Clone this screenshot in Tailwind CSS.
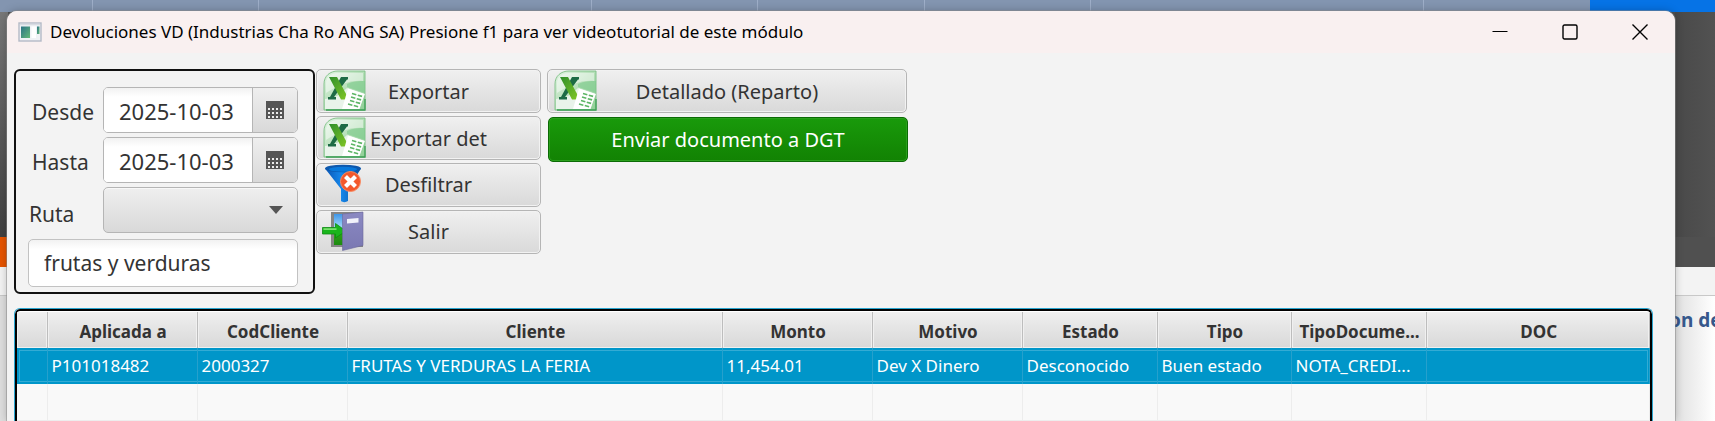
<!DOCTYPE html>
<html lang="es">
<head>
  <meta charset="UTF-8" />
  <meta name="viewport" content="width=device-width, initial-scale=1.0" />
  <title>Devoluciones VD</title>
  <script src="https://cdn.jsdelivr.net/npm/@tailwindcss/browser@4"></script>
</head>

<body class="relative h-screen overflow-hidden bg-white font-['Noto_Sans','Open_Sans',sans-serif] text-[#333333]">

  <!-- application behind the window -->
  <div class="absolute inset-0 flex flex-col" aria-hidden="true">
    <div class="flex h-3 shrink-0 bg-[#8395b0]">
      <div class="w-[93px] border-r border-[#9eaec8]"></div>
      <div class="grid flex-1 grid-cols-[1fr_2fr_1fr_1fr_1fr_2fr_1fr] divide-x divide-[#9eaec8]">
        <div></div><div></div><div></div><div></div><div></div><div></div><div></div>
      </div>
      <div class="w-[125px] bg-[#0673e6]"></div>
    </div>
    <div class="flex h-[225px] shrink-0 justify-between bg-[#505050]">
      <div class="w-2 bg-gradient-to-b from-[#777777] to-[#404040]"></div>
      <div class="w-10 bg-gradient-to-r from-[#494949] to-[#525252]"></div>
    </div>
    <div class="flex h-[30px] shrink-0 justify-between">
      <div class="w-2 bg-[#e65400]"></div>
      <div class="w-11 bg-[#505050]"></div>
    </div>
    <div class="h-[29px] shrink-0 border-b border-[#c8c8c8] bg-[#f3f3f3]"></div>
    <div class="flex flex-1 justify-between">
      <div class="w-2 bg-[#dedede]"></div>
      <div class="w-[46px] bg-gradient-to-r from-[#dcdcdc] to-white pt-3">
        <p class="text-[19px] leading-6 font-bold whitespace-nowrap text-[#36588c]">on de</p>
      </div>
    </div>
  </div>

  <!-- window -->
  <div class="relative mt-[11px] mr-10 ml-[7px] flex h-[calc(100vh-11px)] flex-col overflow-hidden rounded-t-[10px] bg-[#f3f3f3] shadow-[0_0_0_1px_#8a8a8a80,0_0_8px_#00000040]">

    <header class="flex h-[42px] shrink-0 items-center bg-[#f9f0f0] pl-[11px] text-black">
      <svg class="h-5 w-6 shrink-0" viewBox="0 0 24 20">
        <defs>
          <linearGradient id="pane" x1="0" y1="0" x2="1" y2="1">
            <stop offset="0" stop-color="#2c7486" />
            <stop offset="1" stop-color="#64b978" />
          </linearGradient>
        </defs>
        <rect x="1" y="1" width="22" height="18" fill="#f0f2f5" stroke="#b4bac6" stroke-width="1.4" />
        <path d="M2 2.5h20" stroke="#d8dce2" stroke-width="1.5" />
        <rect x="3" y="4.500" width="9" height="11.500" fill="url(#pane)" />
        <rect x="13.500" y="4.500" width="4.500" height="11.500" fill="#ffffff" />
        <rect x="19" y="4.500" width="2.500" height="7.500" fill="url(#pane)" />
      </svg>
      <h1 class="ml-2 text-[17px] leading-6 whitespace-nowrap">Devoluciones VD (Industrias Cha Ro ANG SA) Presione f1 para ver videotutorial de este módulo</h1>
      <div class="ml-auto flex h-full">
        <button type="button" aria-label="Minimizar" class="flex w-[70px] items-center justify-center">
          <svg class="h-4 w-4" viewBox="0 0 16 16" fill="none" stroke="currentColor"><path d="M.5 7.500h15" /></svg>
        </button>
        <button type="button" aria-label="Maximizar" class="flex w-[70px] items-center justify-center">
          <svg class="h-4 w-4" viewBox="0 0 16 16" fill="none" stroke="currentColor" stroke-width="1.400"><rect x="1" y="1" width="14" height="14" rx="1.500" /></svg>
        </button>
        <button type="button" aria-label="Cerrar" class="flex w-[70px] items-center justify-center">
          <svg class="h-4 w-4" viewBox="0 0 16 16" fill="none" stroke="currentColor" stroke-width="1.400"><path d="m.5.5 15 15M15.500.5l-15 15" /></svg>
        </button>
      </div>
    </header>

    <main class="flex min-h-0 flex-1 flex-col pt-4 pr-[22px] pl-[7px]">
      <div class="flex items-start text-[20px] leading-7">

        <form class="h-[225px] w-[301px] rounded-md border-2 border-[#111111] pt-4 pl-3 text-[21px]">
          <div class="grid grid-cols-[75px_195px] gap-y-1">
            <label for="desde" class="self-center pt-1 pl-1">Desde</label>
            <div class="flex h-[46px] overflow-hidden rounded-[5px] border border-[#b5b5b5] bg-white">
              <input id="desde" type="text" value="2025-10-03" class="min-w-0 flex-1 bg-gradient-to-b from-[#f2f2f2] to-white to-20% pt-px pl-[15px] text-[22px] outline-none" />
              <button type="button" aria-label="Elegir fecha desde" class="flex w-[45px] items-center justify-center border-l border-[#b5b5b5] bg-gradient-to-b from-[#efefef] to-[#d9d9d9]">
                <svg class="h-[18px] w-[18px]" viewBox="0 0 18 18"><path fill="#555555" d="M0 0h18v18H0z" /><path stroke="#ececec" stroke-width="2" stroke-dasharray="2 2" d="M2 8h14M2 12h14M2 16h14" /></svg>
              </button>
            </div>
            <label for="hasta" class="self-center pt-1 pl-1">Hasta</label>
            <div class="flex h-[46px] overflow-hidden rounded-[5px] border border-[#b5b5b5] bg-white">
              <input id="hasta" type="text" value="2025-10-03" class="min-w-0 flex-1 bg-gradient-to-b from-[#f2f2f2] to-white to-20% pt-px pl-[15px] text-[22px] outline-none" />
              <button type="button" aria-label="Elegir fecha hasta" class="flex w-[45px] items-center justify-center border-l border-[#b5b5b5] bg-gradient-to-b from-[#efefef] to-[#d9d9d9]">
                <svg class="h-[18px] w-[18px]" viewBox="0 0 18 18"><path fill="#555555" d="M0 0h18v18H0z" /><path stroke="#ececec" stroke-width="2" stroke-dasharray="2 2" d="M2 8h14M2 12h14M2 16h14" /></svg>
              </button>
            </div>
            <label for="ruta" class="self-center pt-2 pl-px">Ruta</label>
            <div class="relative h-[46px]">
              <select id="ruta" class="h-[46px] w-full appearance-none rounded-[5px] border border-[#b5b5b5] bg-gradient-to-b from-[#efefef] to-[#d9d9d9] px-4 shadow-[inset_0_1px_0_#f8f8f8]"><option></option></select>
              <svg class="pointer-events-none absolute top-[19px] right-[15px] h-2 w-[14px]" viewBox="0 0 14 8"><path fill="#555555" d="M0 0h14L7 8z" /></svg>
            </div>
          </div>
          <input type="text" value="frutas y verduras" aria-label="Buscar" class="mt-[6px] h-[48px] w-[270px] rounded-[5px] border border-[#c2c2c2] bg-gradient-to-b from-[#f2f2f2] to-white to-20% pl-[15px] outline-none" />
        </form>

        <div class="ml-px flex w-[225px] flex-col gap-[3px]">
          <button type="button" class="relative h-[44px] rounded-[5px] border border-[#b5b5b5] bg-gradient-to-b from-[#f0f0f0] to-[#d9d9d9] pt-px shadow-[inset_0_0_0_1px_#f2f2f2]">
            <svg class="absolute top-0 left-[6px] h-[41px] w-[43px]"><use href="#excel" /></svg>
            Exportar
          </button>
          <button type="button" class="relative h-[44px] rounded-[5px] border border-[#b5b5b5] bg-gradient-to-b from-[#f0f0f0] to-[#d9d9d9] pt-px shadow-[inset_0_0_0_1px_#f2f2f2]">
            <svg class="absolute top-0 left-[6px] h-[41px] w-[43px]"><use href="#excel" /></svg>
            Exportar det
          </button>
          <button type="button" class="relative h-[44px] rounded-[5px] border border-[#b5b5b5] bg-gradient-to-b from-[#f0f0f0] to-[#d9d9d9] shadow-[inset_0_0_0_1px_#f2f2f2]">
            <svg class="absolute top-0 left-[5px] h-[41px] w-[43px]" viewBox="0 0 43 41">
              <defs>
                <linearGradient id="funnel" x1="0" x2="1">
                  <stop offset="0" stop-color="#0a55b4" />
                  <stop offset=".45" stop-color="#1687ea" />
                  <stop offset="1" stop-color="#0a4f9e" />
                </linearGradient>
              </defs>
              <path fill="url(#funnel)" d="M3 4.500 19 25v12c1.500 1.500 5 1.500 7 0V25L39 4.500z" />
              <ellipse cx="21" cy="4.500" rx="18" ry="3.800" fill="#0d58ad" />
              <ellipse cx="21" cy="5.300" rx="14" ry="2.500" fill="#0879dc" />
              <circle cx="28.500" cy="17.500" r="10" fill="#f4592c" stroke="#f98b62" />
              <path stroke="#ffffff" stroke-width="4.200" d="m23.500 12.500 10 10M33.500 12.500l-10 10" />
            </svg>
            Desfiltrar
          </button>
          <button type="button" class="relative h-[44px] rounded-[5px] border border-[#b5b5b5] bg-gradient-to-b from-[#f0f0f0] to-[#d9d9d9] shadow-[inset_0_0_0_1px_#f2f2f2]">
            <svg class="absolute top-0 left-[5px] h-[41px] w-[43px]" viewBox="0 0 43 41">
              <defs>
                <linearGradient id="sky" x1="0" y1="0" x2="0" y2="1">
                  <stop offset="0" stop-color="#3f96e8" />
                  <stop offset=".45" stop-color="#a8dcfa" />
                  <stop offset=".5" stop-color="#35a81c" />
                  <stop offset="1" stop-color="#1c8a10" />
                </linearGradient>
                <linearGradient id="door" x1="0" y1="0" x2="0" y2="1">
                  <stop offset="0" stop-color="#8b89c2" />
                  <stop offset="1" stop-color="#7a78b2" />
                </linearGradient>
              </defs>
              <path fill="#858585" d="M9 1h32v35H9z" />
              <path fill="url(#sky)" d="M12 3h12v31H12z" />
              <path fill="#19b51c" stroke="#0d8a12" stroke-width=".8" d="M.5 16.500h13v-4L24 20l-10.500 7v-4H.5z" />
              <path fill="#7be06e" d="M1.500 17.300h13v1.700h-13z" />
              <path fill="url(#door)" stroke="#6c6a9c" stroke-width=".6" d="M20.500 3 41 1v33.500l-20.500 5z" />
              <path fill="#f1f1fa" d="m25 8 11.500-1v4.500L25 12.500z" />
            </svg>
            Salir
          </button>
        </div>

        <div class="ml-[6px] flex w-[361px] flex-col gap-1">
          <button type="button" class="relative mr-px h-[44px] rounded-[5px] border border-[#b5b5b5] bg-gradient-to-b from-[#f0f0f0] to-[#d9d9d9] pt-px shadow-[inset_0_0_0_1px_#f2f2f2]">
            <svg class="absolute top-0 left-[6px] h-[41px] w-[43px]"><use href="#excel" /></svg>
            Detallado (Reparto)
          </button>
          <button type="button" class="ml-px h-[45px] rounded-[5px] border border-[#0b6b05] bg-gradient-to-b from-[#199a0b] to-[#128203] text-white shadow-[inset_0_0_0_1px_#2a9f1c]">Enviar documento a DGT</button>
        </div>
      </div>

      <!-- results -->
      <div class="mt-[14px] min-h-0 flex-1 overflow-hidden rounded-t-md border border-b-0 border-[#2aa5cf] bg-white">
        <div class="h-full overflow-hidden rounded-t-[5px] border-2 border-b-0 border-black pt-px">
          <table class="w-full table-fixed border-collapse text-[17px] leading-6">
            <colgroup>
              <col class="w-[30px]" /><col class="w-[150px]" /><col class="w-[150px]" /><col class="w-[375px]" /><col class="w-[150px]" />
              <col class="w-[150px]" /><col class="w-[135px]" /><col class="w-[134px]" /><col class="w-[135px]" /><col />
            </colgroup>
            <thead>
              <tr class="h-9 bg-gradient-to-b from-[#efefef] to-[#d8d8d8] *:border-r *:border-[#bdbdbd] *:pt-1 *:pl-[2px] *:whitespace-nowrap *:shadow-[inset_0_0_0_1px_#f0f0f0]">
                <td></td>
                <th scope="col">Aplicada a</th>
                <th scope="col">CodCliente</th>
                <th scope="col">Cliente</th>
                <th scope="col">Monto</th>
                <th scope="col">Motivo</th>
                <th scope="col">Estado</th>
                <th scope="col">Tipo</th>
                <th scope="col">TipoDocume...</th>
                <th scope="col">DOC</th>
              </tr>
            </thead>
            <tbody>
              <tr class="h-9 bg-[#0096c9] text-white shadow-[inset_0_0_0_2px_#0096c9,inset_0_0_0_3px_#33abd4] *:border-r *:border-[#26a0cc] *:pl-1 *:whitespace-nowrap">
                <td></td>
                <td>P101018482</td>
                <td>2000327</td>
                <td>FRUTAS Y VERDURAS LA FERIA</td>
                <td>11,454.01</td>
                <td>Dev X Dinero</td>
                <td>Desconocido</td>
                <td>Buen estado</td>
                <td>NOTA_CREDI...</td>
                <td></td>
              </tr>
              <tr class="h-9 border-b border-[#ededed] bg-[#f9f9f9] *:border-r *:border-[#ededed]">
                <td></td><td></td><td></td><td></td><td></td><td></td><td></td><td></td><td></td><td></td>
              </tr>
            </tbody>
          </table>
        </div>
      </div>
    </main>
  </div>

  <!-- shared icon -->
  <svg class="absolute h-0 w-0" aria-hidden="true">
    <defs>
      <linearGradient id="sheet" x1="0" y1="0" x2="1" y2="1">
        <stop offset="0" stop-color="#e4f4e5" />
        <stop offset=".5" stop-color="#b5dfb8" />
        <stop offset="1" stop-color="#8fcf96" />
      </linearGradient>
      <linearGradient id="stroke" x1="0" y1="0" x2="1" y2="1">
        <stop offset="0" stop-color="#2f8f2a" />
        <stop offset="1" stop-color="#86c926" />
      </linearGradient>
    </defs>
    <symbol id="excel" viewBox="0 0 43 41">
      <path fill="url(#sheet)" stroke="#7cc083" stroke-width=".9" d="M1 40V14C1 6 7 1 15 1h27v39z" />
      <path fill="#ffffff" opacity=".45" d="M3 14C3 7 8 3 15 3h25v8c-14-1-24 4-37 12z" />
      <path fill="#7cc98a" opacity=".6" d="M24 14c6-3 12-3 18-3v12l-18-6z" />
      <path fill="#e9f3ea" d="M2 29c8-1 13-2 22-11l18 6-6 15H2z" />
      <path fill="#1d6b45" d="M18 7h7v2.500h-1L11 27h2v2.500H5V27h2z" />
      <path fill="url(#stroke)" d="M6 7h8l12 22.500h-8z" />
      <path fill="#ffffff" d="m25 18.500 16.500 5.500-5 15H19z" />
      <path fill="none" stroke="#5db565" stroke-width="1.600" stroke-dasharray="4.500 1.500" d="m29 23.500 10.500 3M28 27l10.500 3M27 30.500l10.500 3M25 34l11 3" />
      <path stroke="#3d9e55" stroke-width="1.300" d="M3 40h39V29" fill="none" />
    </symbol>
  </svg>

</body>
</html>
